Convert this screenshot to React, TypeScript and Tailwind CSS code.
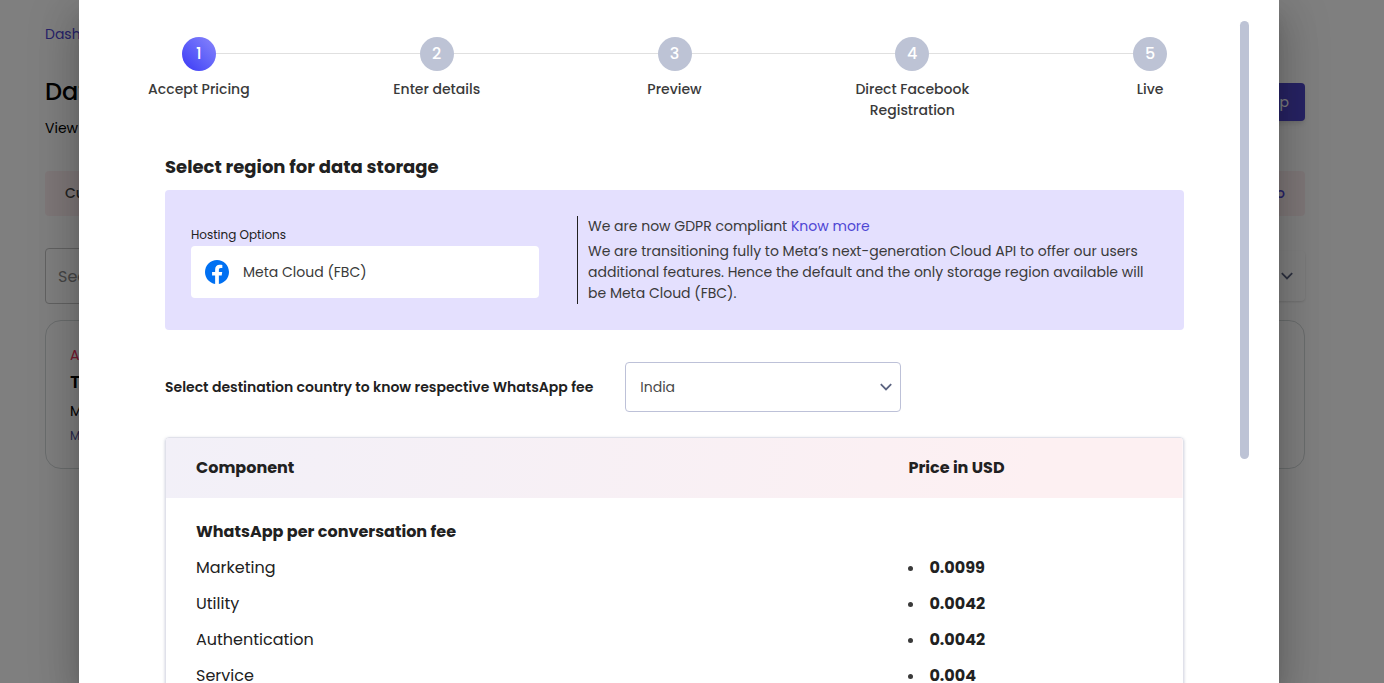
import React from 'react';
import clsx from 'clsx';

const steps = ['Accept Pricing', 'Enter details', 'Preview', 'Direct Facebook Registration', 'Live'];

const fees = [
  { name: 'Marketing', price: '0.0099' },
  { name: 'Utility', price: '0.0042' },
  { name: 'Authentication', price: '0.0042' },
  { name: 'Service', price: '0.004' },
];

function Chevron({ className }: { className: string }) {
  return (
    <svg viewBox="0 0 12 8" fill="none" aria-hidden="true" className={className}>
      <path d="M0.8 1.2 L6 6.4 L11.2 1.2" stroke="currentColor" strokeWidth="1.8" />
    </svg>
  );
}

function FacebookLogo() {
  return (
    <svg viewBox="0 0 24 24" aria-hidden="true" className="size-6 shrink-0">
      <path
        fill="#0070f2"
        d="M24 12.07C24 5.41 18.63 0 12 0S0 5.41 0 12.07C0 18.1 4.39 23.1 10.13 24v-8.44H7.08v-3.49h3.05V9.41c0-3.02 1.79-4.69 4.53-4.69 1.31 0 2.68.24 2.68.24v2.97h-1.51c-1.49 0-1.96.93-1.96 1.89v2.25h3.33l-.53 3.49h-2.8V24C19.61 23.1 24 18.1 24 12.07z"
      />
    </svg>
  );
}

function Dashboard() {
  return (
    <main className="pl-[45px] pr-[79px] pt-6 text-sm leading-[21px] text-black">
      <a href="#dashboard" className="text-[#4e46d4]">Dashboard</a>
      <header className="mt-[29px] flex items-start justify-between">
        <div>
          <h1 className="text-2xl font-medium leading-9">Data</h1>
          <p className="mt-2">View details</p>
        </div>
        <button className="mt-[9px] h-[38px] rounded bg-[#4e46c8] px-4 text-white shadow-md">Set up</button>
      </header>
      <nav className="mt-8 flex h-[45px] items-center justify-between rounded bg-[#fdeff1] px-5 font-medium">
        <span className="text-[#444]">Current</span>
        <a href="#demo" className="text-[#4e46d4]">Demo</a>
      </nav>
      <div className="mt-8 flex items-center justify-between">
        <input
          type="text"
          aria-label="Search"
          placeholder="Search"
          className="h-14 w-72 rounded border border-[#c4c4c4] px-3 text-base placeholder:text-[#8c8c8c]"
        />
        <button aria-label="Filter" className="flex h-[50px] w-40 items-center justify-end rounded pr-3 text-[#5b6380] shadow">
          <Chevron className="w-3" />
        </button>
      </div>
      <section className="mt-4 h-[149px] rounded-2xl border border-[#d5dadb] px-6 pt-6">
        <p className="text-[#f0325f]">Active</p>
        <h2 className="mt-0.5 text-lg font-semibold leading-7">Test</h2>
        <p className="mt-[5px]">Messages</p>
        <p className="mt-1 text-xs leading-5 text-[#50509a]">Monthly</p>
      </section>
    </main>
  );
}

function Stepper() {
  return (
    <ol className="grid grid-cols-5">
      {steps.map((label, i) => (
        <li key={label} className="flex flex-col items-center">
          <div className="flex w-full items-center">
            <span className={clsx('mb-px h-px flex-1', i > 0 && 'bg-[#e0e0e0]')} />
            <span
              className={clsx(
                'flex size-[34px] items-center justify-center rounded-full text-base font-medium text-white',
                i === 0 ? 'bg-linear-to-tr from-[#3d33f5] to-[#8b84fb]' : 'bg-[#bdc3d5]',
              )}
            >
              {i + 1}
            </span>
            <span className={clsx('mb-px h-px flex-1', i < steps.length - 1 && 'bg-[#e0e0e0]')} />
          </div>
          <span className="mt-2 max-w-[140px] text-center text-sm font-medium leading-[21px] text-[#3a3a3a]">
            {label}
          </span>
        </li>
      ))}
    </ol>
  );
}

function PricingDialog() {
  return (
    <div
      role="dialog"
      aria-label="Accept Pricing"
      className="relative w-full max-w-[1200px] overflow-hidden bg-white pl-px pr-2.5 pt-[37px] text-[#212121] shadow-[0px_11px_15px_-7px_rgba(0,0,0,0.2),0px_24px_38px_3px_rgba(0,0,0,0.14),0px_9px_46px_8px_rgba(0,0,0,0.12)]"
    >
      <Stepper />
      <div className="px-[85px]">
        <h2 className="mt-8 text-lg font-bold leading-[27px]">Select region for data storage</h2>
        <section className="mt-2.5 flex gap-[38px] rounded bg-[#e4e0fe] p-[26px]">
          <div className="w-[348px] shrink-0 pt-2.5">
            <p className="text-xs leading-[18px]">Hosting Options</p>
            <div className="mt-0.5 flex h-[52px] items-center gap-3.5 rounded bg-white px-3.5 text-sm text-[#3a3a3a]">
              <FacebookLogo />
              Meta Cloud (FBC)
            </div>
          </div>
          <div className="border-l border-[#212121] pl-2.5 text-sm leading-[21px] text-[#3a3a3a]">
            <p>
              We are now GDPR compliant <a href="#gdpr" className="text-[#4e46d4]">Know more</a>
            </p>
            <p className="mt-1">
              We are transitioning fully to Meta’s next-generation Cloud API to offer our users additional features.
              Hence the default and the only storage region available will be Meta Cloud (FBC).
            </p>
          </div>
        </section>
        <div className="mt-8 flex items-center gap-8">
          <label htmlFor="country" className="min-w-[428px] whitespace-nowrap text-sm font-semibold">
            Select destination country to know respective WhatsApp fee
          </label>
          <div className="relative w-[276px]">
            <select
              id="country"
              className="h-[50px] w-full appearance-none rounded border border-[#bdc1d8] bg-white px-3.5 text-sm text-[#4a4a4a]"
            >
              <option>India</option>
            </select>
            <Chevron className="pointer-events-none absolute right-[9px] top-[21px] w-3 text-[#5b6380]" />
          </div>
        </div>
        <div className="mt-[25px] overflow-hidden rounded-sm border border-[#e0e1ea] shadow-[0_1px_3px_rgba(90,100,140,0.35)]">
          <table className="w-full table-fixed text-left text-base">
            <thead>
              <tr className="h-[60px] bg-[linear-gradient(100deg,#f2f0f8,#fdf0f2_85%)]">
                <th className="w-[73%] pl-[30px] font-bold">Component</th>
                <th className="font-bold">Price in USD</th>
              </tr>
            </thead>
            <tbody>
              <tr className="h-[52px] align-bottom">
                <th colSpan={2} className="pl-[30px] font-bold leading-9">WhatsApp per conversation fee</th>
              </tr>
              {fees.map((fee) => (
                <tr key={fee.name} className="h-9">
                  <td className="pl-[30px]">{fee.name}</td>
                  <td className="font-bold">
                    <span className="flex items-center gap-4">
                      <span className="size-[5px] rounded-full bg-[#3a3a3a]" />
                      {fee.price}
                    </span>
                  </td>
                </tr>
              ))}
            </tbody>
          </table>
        </div>
      </div>
      <div className="absolute right-[30px] top-[21px] h-[438px] w-[9px] rounded-full bg-[#bdc3d5]" />
    </div>
  );
}

export default function App() {
  return (
    <div className="relative h-screen overflow-hidden bg-white font-['Poppins','Inter',sans-serif]">
      <Dashboard />
      <div className="absolute inset-0 flex items-stretch justify-center bg-black/50 pr-[26px]">
        <PricingDialog />
      </div>
    </div>
  );
}
